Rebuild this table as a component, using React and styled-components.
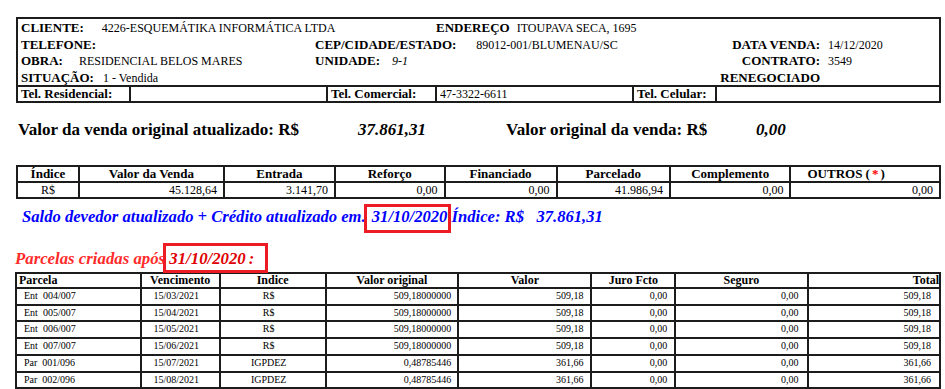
import React from 'react';
import styled, { createGlobalStyle } from 'styled-components';

const SERIF = '"Liberation Serif", "Times New Roman", serif';

const GlobalStyle = createGlobalStyle`
  body {
    margin: 0;
    background: #fff;
    color: #000;
    font-family: ${SERIF};
  }
`;

const LINE = '#1c1c1c';

const Page = styled.div`
  width: 925px;
  padding: 17px 4px 0 16px;
`;

const InfoBox = styled.section`
  border: 2px solid ${LINE};
`;

const InfoGrid = styled.div`
  display: grid;
  grid-template-columns: 294px 121px 283px 101px 1fr;
  grid-auto-rows: 16.5px;
  padding-left: 3px;
  line-height: 16.5px;
  white-space: nowrap;
`;

const Field = styled.div`
  grid-column: ${p => p.$span || 'auto'};
  justify-self: ${p => (p.$right ? 'end' : 'start')};
  padding-left: ${p => p.$pad || 0}px;
`;

const Label = styled.span`
  font-size: 13px;
  font-weight: bold;
`;

const Value = styled.span`
  font-size: 12px;
  margin-left: ${p => p.$gap || 0}px;
  font-style: ${p => (p.$italic ? 'italic' : 'normal')};
`;

const PhoneRow = styled.div`
  display: grid;
  grid-template-columns: 113px 197px 109px 197px 83px 1fr;
  border-top: 2px solid ${LINE};
  height: 14px;
  line-height: 14px;
  white-space: nowrap;
`;

const PhoneCell = styled.div`
  padding-left: 3px;
  border-right: ${p => (p.$last ? 'none' : `2px solid ${LINE}`)};
  font-size: ${p => (p.$label ? 13 : 12)}px;
  font-weight: ${p => (p.$label ? 'bold' : 'normal')};
`;

const Totals = styled.div`
  display: grid;
  grid-template-columns: 340px 148px 250px 1fr;
  margin-top: 17px;
  padding-left: 2px;
  font-size: 17px;
  font-weight: bold;
  line-height: 20px;
  white-space: nowrap;
`;

const Amount = styled.span`
  font-style: italic;
`;

const Table = styled.table`
  table-layout: fixed;
  border-collapse: collapse;
  margin-top: ${p => p.$top}px;
  margin-left: ${p => p.$left || 0}px;
  font-family: ${SERIF};
`;

const HeadCell = styled.th`
  width: ${p => p.$w}px;
  border: 2px solid ${LINE};
  padding: 0 ${p => p.$pr || 0}px 0 ${p => p.$pl || 0}px;
  font-size: ${p => p.$size}px;
  line-height: ${p => p.$lh}px;
  font-weight: bold;
  text-align: ${p => p.$align || 'center'};
  white-space: nowrap;
`;

const Cell = styled.td`
  border: 2px solid ${LINE};
  padding: 0 ${p => p.$pr || 0}px 0 ${p => p.$pl || 0}px;
  font-size: ${p => p.$size}px;
  line-height: ${p => p.$lh}px;
  text-align: ${p => p.$align || 'right'};
  white-space: pre;
`;

const Star = styled.span`
  color: #ff0000;
  margin: 0 2px;
`;

const Balance = styled.p`
  margin: 8px 0 0;
  padding-left: 6px;
  color: #0000ff;
  font-size: 16.6px;
  font-style: italic;
  font-weight: bold;
  line-height: 20px;
  white-space: pre;
`;

const Marked = styled.span`
  border: 3px solid #ed1c24;
  padding: ${p => p.$pad};
  margin: ${p => p.$margin};
  color: ${p => p.$color || 'inherit'};
`;

const Colon = styled.span`
  margin-left: 3px;
`;

const SectionTitle = styled.h3`
  margin: 22px 0 0 -1px;
  color: #ff2b2b;
  font-size: 16.8px;
  font-style: italic;
  font-weight: bold;
  line-height: 20px;
  white-space: pre;
`;

const summaryCols = [
  { title: 'Índice', w: 62 },
  { title: 'Valor da Venda', w: 148 },
  { title: 'Entrada', w: 114 },
  { title: 'Reforço', w: 113 },
  { title: 'Financiado', w: 114 },
  { title: 'Parcelado', w: 116 },
  { title: 'Complemento', w: 122 },
  { title: 'OUTROS', w: 136 },
];

const summaryValues = ['R$', '45.128,64', '3.141,70', '0,00', '0,00', '41.986,94', '0,00', '0,00'];

const parcelCols = [
  { title: 'Parcela', w: 123, head: 'left', cell: 'left', pl: 2, cpl: 7 },
  { title: 'Vencimento', w: 78, head: 'center', cell: 'center', cpr: 8 },
  { title: 'Indice', w: 106, head: 'center', cell: 'center', cpr: 8 },
  { title: 'Valor original', w: 133, head: 'center', cell: 'right', cpr: 6 },
  { title: 'Valor', w: 135, head: 'center', cell: 'right', cpr: 7 },
  { title: 'Juro Fcto', w: 83, head: 'center', cell: 'right', cpr: 7 },
  { title: 'Seguro', w: 134, head: 'center', cell: 'right', cpr: 8 },
  { title: 'Total', w: 134, head: 'right', cell: 'right', cpr: 8 },
];

const parcels = [
  ['Ent  004/007', '15/03/2021', 'R$', '509,18000000', '509,18', '0,00', '0,00', '509,18'],
  ['Ent  005/007', '15/04/2021', 'R$', '509,18000000', '509,18', '0,00', '0,00', '509,18'],
  ['Ent  006/007', '15/05/2021', 'R$', '509,18000000', '509,18', '0,00', '0,00', '509,18'],
  ['Ent  007/007', '15/06/2021', 'R$', '509,18000000', '509,18', '0,00', '0,00', '509,18'],
  ['Par  001/096', '15/07/2021', 'IGPDEZ', '0,48785446', '361,66', '0,00', '0,00', '361,66'],
  ['Par  002/096', '15/08/2021', 'IGPDEZ', '0,48785446', '361,66', '0,00', '0,00', '361,66'],
];

export default function App() {
  return (
    <Page>
      <GlobalStyle />
      <InfoBox>
        <InfoGrid>
          <Field $span="1 / 3">
            <Label>CLIENTE:</Label>
            <Value $gap={18}>4226-ESQUEMÁTIKA INFORMÁTICA LTDA</Value>
          </Field>
          <Field $span="3 / 6">
            <Label>ENDEREÇO</Label>
            <Value $gap={7}>ITOUPAVA SECA, 1695</Value>
          </Field>

          <Field><Label>TELEFONE:</Label></Field>
          <Field $span="2 / 4">
            <Label>CEP/CIDADE/ESTADO:</Label>
            <Value $gap={20}>89012-001/BLUMENAU/SC</Value>
          </Field>
          <Field $right><Label>DATA VENDA:</Label></Field>
          <Field $pad={8}><Value>14/12/2020</Value></Field>

          <Field>
            <Label>OBRA:</Label>
            <Value $gap={16}>RESIDENCIAL BELOS MARES</Value>
          </Field>
          <Field $span="2 / 4">
            <Label>UNIDADE:</Label>
            <Value $gap={12} $italic>9-1</Value>
          </Field>
          <Field $right><Label>CONTRATO:</Label></Field>
          <Field $pad={8}><Value>3549</Value></Field>

          <Field>
            <Label>SITUAÇÃO:</Label>
            <Value $gap={9}>1 - Vendida</Value>
          </Field>
          <Field $span="4 / 5" $right><Label>RENEGOCIADO</Label></Field>
        </InfoGrid>
        <PhoneRow>
          <PhoneCell $label>Tel. Residencial:</PhoneCell>
          <PhoneCell />
          <PhoneCell $label>Tel. Comercial:</PhoneCell>
          <PhoneCell>47-3322-6611</PhoneCell>
          <PhoneCell $label>Tel. Celular:</PhoneCell>
          <PhoneCell $last />
        </PhoneRow>
      </InfoBox>

      <Totals>
        <span>Valor da venda original atualizado: R$</span>
        <Amount>37.861,31</Amount>
        <span>Valor original da venda: R$</span>
        <Amount>0,00</Amount>
      </Totals>

      <Table $top={25}>
        <thead>
          <tr>
            {summaryCols.map(c => (
              <HeadCell
                key={c.title}
                $w={c.w}
                $size={13}
                $lh={14}
                $align={c.title === 'OUTROS' ? 'left' : 'center'}
                $pl={c.title === 'OUTROS' ? 16 : 0}
              >
                {c.title === 'OUTROS' ? <>OUTROS (<Star>*</Star>)</> : c.title}
              </HeadCell>
            ))}
          </tr>
        </thead>
        <tbody>
          <tr>
            {summaryValues.map((v, i) => (
              <Cell key={i} $size={12} $lh={14} $align={i === 0 ? 'center' : 'right'} $pr={i === 0 ? 0 : 6}>
                {v}
              </Cell>
            ))}
          </tr>
        </tbody>
      </Table>

      <Balance>
        Saldo devedor atualizado + Crédito atualizado em.{' '}
        <Marked $pad="0 1px 4px 5px" $margin="0 -4px 0 -6px">31/10/2020</Marked>
        {' '}Índice: R$   37.861,31
      </Balance>

      <SectionTitle>
        Parcelas criadas após{' '}
        <Marked $pad="3px 11px 2px 3px" $margin="0 -14px 0 -6px" $color="#e00000">
          31/10/2020<Colon>:</Colon>
        </Marked>
      </SectionTitle>

      <Table $top={3} $left={-1}>
        <thead>
          <tr>
            {parcelCols.map(c => (
              <HeadCell key={c.title} $w={c.w} $size={12} $lh={13} $align={c.head} $pl={c.pl}>
                {c.title}
              </HeadCell>
            ))}
          </tr>
        </thead>
        <tbody>
          {parcels.map(row => (
            <tr key={row[0]}>
              {row.map((v, i) => (
                <Cell
                  key={i}
                  $size={10}
                  $lh={14.7}
                  $align={parcelCols[i].cell}
                  $pl={parcelCols[i].cpl}
                  $pr={parcelCols[i].cpr}
                >
                  {v}
                </Cell>
              ))}
            </tr>
          ))}
        </tbody>
      </Table>
    </Page>
  );
}
